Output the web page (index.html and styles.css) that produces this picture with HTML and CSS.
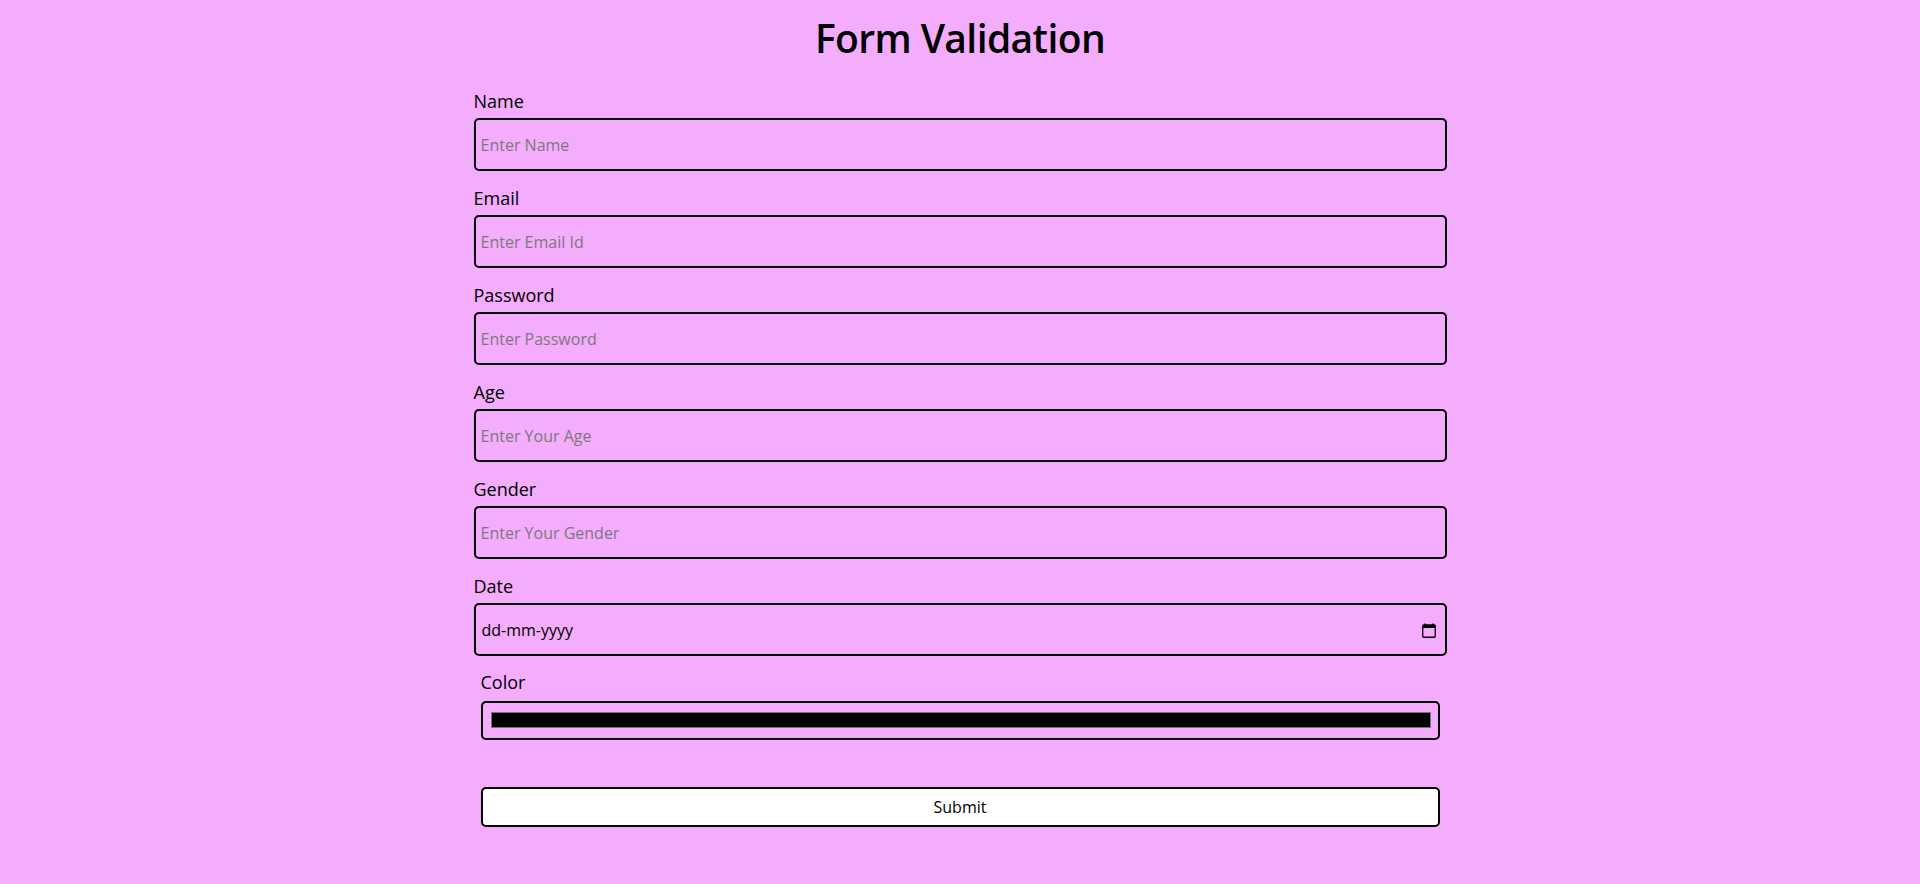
FILE: index.html
```html
<!DOCTYPE html>
<html lang="en">
<head>
<meta charset="utf-8">
<title>Form Validation</title>
<link rel="stylesheet" href="styles.css">
</head>
<body>
<main class="page">
  <h1 class="title">Form Validation</h1>
  <form class="form">
    <div class="field">
      <label class="label" for="name">Name</label>
      <input class="input" id="name" type="text" placeholder="Enter Name">
    </div>
    <div class="field">
      <label class="label" for="email">Email</label>
      <input class="input" id="email" type="text" placeholder="Enter Email Id">
    </div>
    <div class="field">
      <label class="label" for="password">Password</label>
      <input class="input" id="password" type="password" placeholder="Enter Password">
    </div>
    <div class="field">
      <label class="label" for="age">Age</label>
      <input class="input" id="age" type="text" placeholder="Enter Your Age">
    </div>
    <div class="field">
      <label class="label" for="gender">Gender</label>
      <input class="input" id="gender" type="text" placeholder="Enter Your Gender">
    </div>
    <div class="field">
      <label class="label" for="date">Date</label>
      <div class="input date-input" id="date">
        <span class="date-text">dd-mm-yyyy</span>
        <svg class="cal-icon" width="14" height="15" viewBox="0 0 14 15" aria-hidden="true">
          <path d="M3 0.5v2M11 0.5v2" stroke="#000" stroke-width="1.4" fill="none"/>
          <rect x="0.75" y="2" width="12.5" height="12.25" rx="1" fill="none" stroke="#000" stroke-width="1.3"/>
          <rect x="0.75" y="2" width="12.5" height="3" fill="#000"/>
        </svg>
      </div>
    </div>
    <div class="field field-inset">
      <label class="label" for="color">Color</label>
      <div class="color-input" id="color"><span class="swatch"></span></div>
    </div>
    <button class="submit" type="button">Submit</button>
  </form>
</main>
</body>
</html>
```

FILE: styles.css
```css
* {
  box-sizing: border-box;
}

body {
  margin: 0;
  background: #f4acfd;
  font-family: "Open Sans", "Noto Sans", sans-serif;
  color: #000;
}

.page {
  width: 973px;
  margin: 0 auto;
  padding-top: 14px;
}

.title {
  margin: 0;
  font-size: 39px;
  line-height: 48px;
  font-weight: 600;
  letter-spacing: -0.6px;
  text-align: center;
}

.form {
  display: flex;
  flex-direction: column;
  gap: 16px;
  margin-top: 28px;
}

.field {
  display: flex;
  flex-direction: column;
  gap: 6px;
}

.field-inset {
  margin: -1px 7px 0 7px;
  gap: 8px;
}

.label {
  font-size: 18px;
  line-height: 22px;
}

.input {
  height: 53px;
  border: 2px solid #000;
  border-radius: 5px;
  background: transparent;
  padding: 1px 6px 0 5px;
  font-family: inherit;
  font-size: 16px;
  color: #000;
  outline: none;
}

.input::placeholder {
  color: #7a7a7a;
}

.date-input {
  display: flex;
  align-items: center;
  justify-content: space-between;
  padding: 0 9px 0 6px;
}

.date-text {
  font-size: 16px;
}

.cal-icon {
  display: block;
  margin-top: 1px;
}

.color-input {
  height: 39px;
  border: 2px solid #000;
  border-radius: 5px;
  padding: 9px 7px 10px 8px;
  display: flex;
}

.swatch {
  flex: 1;
  background: #000;
  border: 1px solid #777;
}

.submit {
  margin: 31px 7px 0 7px;
  height: 40px;
  border: 2px solid #000;
  border-radius: 5px;
  background: #fff;
  font-family: inherit;
  font-size: 16px;
  color: #000;
  padding: 0;
}
```
